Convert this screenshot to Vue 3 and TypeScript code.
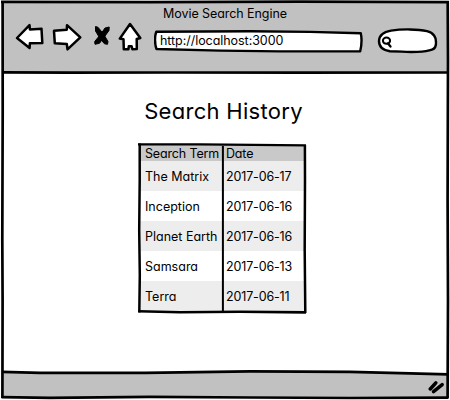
<script setup lang="ts">
interface HistoryEntry {
  term: string
  date: string
}

const entries: HistoryEntry[] = [
  { term: 'The Matrix', date: '2017-06-17' },
  { term: 'Inception', date: '2017-06-16' },
  { term: 'Planet Earth', date: '2017-06-16' },
  { term: 'Samsara', date: '2017-06-13' },
  { term: 'Terra', date: '2017-06-11' },
]
</script>

<template>
  <div class="browser">
    <header class="chrome">
      <div class="title">Movie Search Engine</div>
      <div class="toolbar">
        <svg class="nav" width="140" height="36" viewBox="8 18 140 36">
          <g fill="#fff" stroke="#000" stroke-width="2.5" stroke-linejoin="round">
            <path d="M17 38 L29.5 25.2 L29.9 29.5 L41.5 28.7 L42.3 43 L29.9 43.2 L29.6 48 Z" />
            <path d="M54 30.8 L66.8 29.8 L67 25.2 L80.3 37.3 L67.5 49.3 L66.8 44 L54.8 43.3 Z" />
            <path d="M130 24 L140.3 38 L136.7 39 L136.8 49 L132.4 49.3 L131.6 46.3 L128.8 46.3 L128.4 49.3 L123.8 49.3 L123.5 39.2 L119.8 38.6 Z" />
          </g>
          <g stroke="#000" stroke-linejoin="round">
            <path d="M95.5 26.5 L98 27.3 L103.5 34 L108 41.5 L107.5 44.3 L104.5 43.8 L100 38.5 L95.5 31 Z" />
            <path d="M109.2 27 L109 30.5 L105 36 L99.5 43.3 L95 44.3 L94.7 41.5 L100.5 34.5 L105 28 Z" />
          </g>
        </svg>
        <div class="address">
          <svg class="outline" width="210" height="24" viewBox="154 30 210 24">
            <path d="M156.3 31.8 L250 31.3 L310 31.9 L360.8 33.2 C362 39 361.7 45 360.2 51.2 L280 51.4 L220 50.6 L156.5 49 C154.6 44 154.6 36 156.3 31.8 Z" fill="#fff" stroke="#000" stroke-width="2.4" stroke-linejoin="round" />
          </svg>
          <span class="url">http://localhost:3000</span>
        </div>
        <svg class="search" width="62" height="26" viewBox="377 28 62 26">
          <path d="M379 41 C379.2 35 384.5 31.8 391 30.6 C402 28.9 418 29 427 31.2 C434 32.8 436.3 38 436 42 C436.3 46.8 435 48.7 432 49.6 C425 52.2 410 52.4 402 51.6 L390 51.2 C383 50.3 379 46.8 379 41 Z" fill="#fff" stroke="#000" stroke-width="2.4" />
          <ellipse cx="386.5" cy="40.7" rx="3.6" ry="3.1" fill="none" stroke="#000" stroke-width="2" />
          <path d="M388 43.5 L390.5 46.5" stroke="#000" stroke-width="2.3" stroke-linecap="round" />
        </svg>
      </div>
    </header>

    <main class="page">
      <h1>Search History</h1>
      <div class="history">
        <table>
          <thead>
            <tr>
              <th>Search Term</th>
              <th>Date</th>
            </tr>
          </thead>
          <tbody>
            <tr v-for="entry in entries" :key="entry.term">
              <td>{{ entry.term }}</td>
              <td class="date">{{ entry.date }}</td>
            </tr>
          </tbody>
        </table>
        <svg class="outline" width="170" height="174" viewBox="137 142 170 174">
          <g fill="none" stroke="#000">
            <path d="M138 144.4 L200 144.3 L306 145.3" stroke-width="2.3" />
            <path d="M139.7 143.5 L139.7 180 L139.2 230 L139.8 275 L139.3 312.5" stroke-width="2.5" />
            <path d="M304.9 145 L305 180 L304.7 250 L305.3 313" stroke-width="2.5" />
            <path d="M138.5 311.3 L180 312.2 L240 311.8 L306 312.4" stroke-width="2.6" />
            <path d="M222.9 146 L222.9 311" stroke-width="2" />
          </g>
        </svg>
      </div>
    </main>

    <footer class="status">
      <svg width="18" height="16" viewBox="428 379 18 16">
        <g stroke="#000" stroke-width="3.5" stroke-linecap="round">
          <path d="M430.3 389 L435.8 382.8" />
          <path d="M433.5 391.6 L442.2 384.6" />
        </g>
      </svg>
    </footer>

    <svg class="frame" width="450" height="400" viewBox="0 0 450 400">
      <path d="M0 0 H450 V400 H0 Z M2.5 2 L447 2 L448 25 L447.5 398 L2.5 397.5 Z" fill="#fff" fill-rule="evenodd" />
      <path d="M2.5 366 L2.5 371.8 L145 372.6 L250 371.3 L370 372.3 L448 374.6 L448 366 Z" fill="#fff" />
      <g fill="none" stroke="#000" stroke-width="2.7">
        <path d="M1 1.8 L150 2.1 L300 1.7 L449 2.1" />
        <path d="M2.6 1 L2.7 110 L2.3 240 L2.6 300 L2.4 398" />
        <path d="M447.7 1 L448 60 L447.6 200 L448 300 L447.6 398" />
        <path d="M2 72.4 L70 72.7 L170 72.5 L300 72.6 L448 72.5" />
        <path d="M2 371.8 L40 372.8 L145 372.9 L250 371.4 L350 371.9 L410 373.4 L448 374.4" />
        <path d="M1.5 397.2 L50 397.9 L150 396.8 L250 397.5 L350 398 L448.5 397.6" />
      </g>
    </svg>
  </div>
</template>

<style>
body {
  margin: 0;
  background: #fff;
}
</style>

<style scoped>
.browser {
  position: relative;
  display: flex;
  flex-direction: column;
  width: 450px;
  height: 400px;
  overflow: hidden;
  background: #fff;
  color: #000;
  font-family: Inter, "Open Sans", sans-serif;
  font-feature-settings: "cv11", "ss03";
  font-size: 12.5px;
}

.chrome {
  height: 72px;
  background: #c1c1c1;
}

.title {
  box-sizing: border-box;
  height: 18px;
  padding-top: 5px;
  line-height: 18px;
  letter-spacing: -0.07px;
  text-align: center;
}

.toolbar {
  display: flex;
  align-items: flex-start;
  padding-left: 8px;
}

.nav {
  flex: none;
}

.address {
  position: relative;
  flex: none;
  width: 210px;
  height: 24px;
  margin: 12px 13px 0 6px;
}

.outline {
  position: absolute;
  top: 0;
  left: 0;
}

.url {
  position: relative;
  display: block;
  padding-left: 6px;
  line-height: 21px;
  letter-spacing: -0.05px;
}

.search {
  flex: none;
  margin-top: 10px;
}

.page {
  display: flex;
  flex: 1;
  flex-direction: column;
  align-items: center;
}

h1 {
  margin: 23px 0 0;
  padding-right: 3px;
  font-size: 22px;
  font-weight: 400;
  line-height: 32px;
  letter-spacing: 0.3px;
}

.history {
  position: relative;
  width: 170px;
  height: 174px;
  margin: 15px 6px 0 0;
}

table {
  width: 166px;
  margin: 3px 0 0 2px;
  border-spacing: 0;
  table-layout: fixed;
}

th,
td {
  height: 28px;
  padding: 2px 0 0 6px;
  line-height: 28px;
  text-align: left;
  font-weight: 400;
  white-space: nowrap;
}

th:first-child {
  width: 78px;
}

th {
  height: 14px;
  line-height: 14px;
  letter-spacing: -0.15px;
  background: #c9c9c9;
}

th:last-child,
td:last-child {
  padding-left: 3px;
}

.date {
  letter-spacing: -0.15px;
}

tbody tr:nth-child(odd) {
  background: #ededed;
}

.status {
  display: flex;
  justify-content: flex-end;
  height: 34px;
  background: #c1c1c1;
}

.status svg {
  margin: 13px 4px 0 0;
}

.frame {
  position: absolute;
  inset: 0;
}
</style>
